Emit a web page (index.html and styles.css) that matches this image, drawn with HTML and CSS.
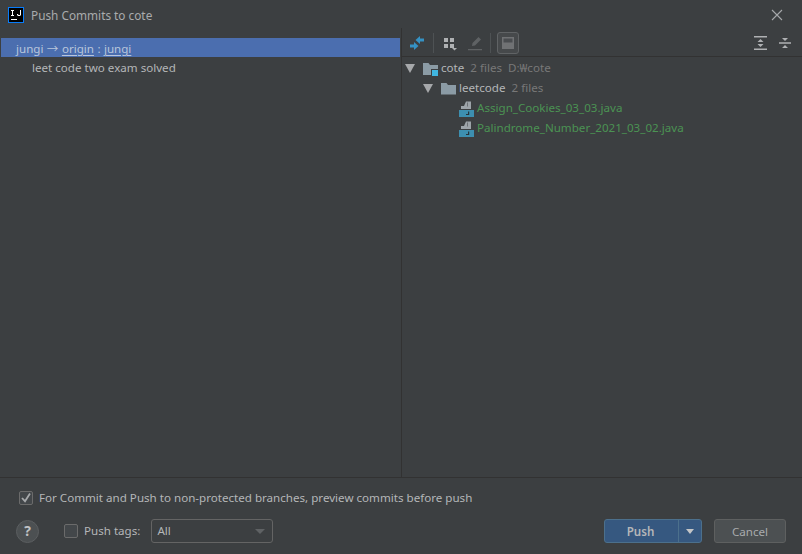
FILE: index.html
```html
<!DOCTYPE html>
<html lang="en">
<head>
<meta charset="utf-8">
<title>Push Commits to cote</title>
<link rel="stylesheet" href="styles.css">
</head>
<body>
<div class="dialog">
  <header class="titlebar">
    <svg class="app-icon" width="16" height="16" viewBox="0 0 16 16"><rect x="0.5" y="0.5" width="15" height="15" fill="#000" stroke="#087cfa"/><rect x="3" y="12" width="6" height="1" fill="#fff"/><path d="M3 3h3v1H5v4h1v1H3V8h1V4H3zM10 3h3v5l-1 1h-2l-1-1V7h1l.5 1H12V3h-2z" fill="#fff"/></svg>
    <span class="title">Push Commits to cote</span>
    <svg class="close" width="12" height="12" viewBox="0 0 12 12"><path d="M1 1l10 10M11 1L1 11" stroke="#a6a8aa" stroke-width="1.1" fill="none"/></svg>
  </header>
  <main class="split">
    <section class="commits">
      <div class="branch-row"><span>jungi → <u>origin</u> : <u>jungi</u></span></div>
      <div class="commit-row">leet code two exam solved</div>
    </section>
    <section class="changes">
      <div class="toolbar">
        <svg class="tb-icon" width="16" height="16" viewBox="0 0 16 16"><path d="M6.500 5L11 1v2.500h4v3h-4V9zM9.500 11L5 7v2.500H1v3h4V15z" fill="#3592c4"/></svg>
        <span class="sep"></span>
        <svg class="tb-icon" width="16" height="16" viewBox="0 0 16 16"><path d="M2 3h4v4H2zM8 3h4v4H8zM2 9h4v4H2zM8 9h4v4H8z" fill="#afb1b3"/><path d="M10 13h5l-2.500 2.500z" fill="#afb1b3"/></svg>
        <svg class="tb-icon pencil" width="16" height="16" viewBox="0 0 16 16"><path d="M1 14h14v1.300H1zM5 11l.5-3L11.500 2 14 4.500 8 10.500z" fill="#5f6264"/></svg>
        <span class="sep"></span>
        <span class="toggle"><svg width="14" height="14" viewBox="0 0 14 14"><rect x="1" y="1" width="12" height="12" fill="#707274"/><rect x="2.500" y="2.500" width="9" height="4" fill="#4a4d50"/></svg></span>
        <span class="spacer"></span>
        <svg class="tb-icon" width="16" height="16" viewBox="0 0 16 16"><path d="M1 1h13v1.500H1zM1 13.500h13V15H1zM7.500 4l3 3h-6zM4.500 9h6l-3 3z" fill="#afb1b3"/></svg>
        <svg class="tb-icon" width="16" height="16" viewBox="0 0 16 16"><path d="M2 7.300h12v1.400H2zM5 3h6L8 6zM8 10l3 3H5z" fill="#afb1b3"/></svg>
      </div>
      <ul class="tree">
        <li class="node depth0">
          <span class="arrow"></span>
          <svg class="node-icon" width="16" height="16" viewBox="0 0 16 16"><path d="M0 3h5.500l1.500 2h8v10H0z" fill="#8b9ba5"/><rect x="8" y="9" width="8" height="7" fill="#3b3f42"/><rect x="9" y="10" width="6" height="6" fill="#40b6e0"/></svg>
          <span class="name">cote</span><span class="meta">2 files</span><span class="meta">D:₩cote</span>
        </li>
        <li class="node depth1">
          <span class="arrow"></span>
          <svg class="node-icon" width="16" height="16" viewBox="0 0 16 16"><path d="M0 3h5.500l1.500 2h8v9.500H0z" fill="#8b9ba5"/></svg>
          <span class="name">leetcode</span><span class="meta">2 files</span>
        </li>
        <li class="node depth2">
          <svg class="node-icon" width="16" height="18" viewBox="0 0 16 18"><path d="M7 2.500h5V10H2V7h3z" fill="#9da4a9"/><rect x="8" y="3.500" width="1" height="4" fill="#6c7175"/><rect x="0" y="11" width="15" height="7" fill="#3d8fb0"/><path d="M9 12.500h1.200V16H7v-1h2z" fill="#26343b"/></svg>
          <span class="file">Assign_Cookies_03_03.java</span>
        </li>
        <li class="node depth2">
          <svg class="node-icon" width="16" height="18" viewBox="0 0 16 18"><path d="M7 2.500h5V10H2V7h3z" fill="#9da4a9"/><rect x="8" y="3.500" width="1" height="4" fill="#6c7175"/><rect x="0" y="11" width="15" height="7" fill="#3d8fb0"/><path d="M9 12.500h1.200V16H7v-1h2z" fill="#26343b"/></svg>
          <span class="file">Palindrome_Number_2021_03_02.java</span>
        </li>
      </ul>
    </section>
  </main>
  <footer class="footer">
    <label class="preview">
      <span class="check checked"><svg width="14" height="14" viewBox="0 0 14 14"><path d="M3 7l3 3.200L11 2.500" stroke="#a7a9ab" stroke-width="1.800" fill="none"/></svg></span>
      For Commit and Push to non-protected branches, preview commits before push
    </label>
    <div class="actions">
      <span class="help">?</span>
      <label class="tags"><span class="check"></span>Push tags:</label>
      <span class="select">All<span class="caret"></span></span>
      <span class="spacer"></span>
      <span class="push"><span class="push-main">Push</span><span class="push-drop"><span class="drop-caret"></span></span></span>
      <span class="cancel">Cancel</span>
    </div>
  </footer>
</div>
</body>
</html>
```
FILE: styles.css
```css
* { box-sizing: border-box; }
html, body { margin: 0; height: 100%; }
body { background: #3c3f41; color: #b4b6b8; font: 11.6px/16px "Noto Sans", "Noto Sans CJK KR", sans-serif; overflow: hidden; }
.dialog { width: 802px; height: 554px; display: flex; flex-direction: column; }
.titlebar { height: 28px; flex: none; display: flex; align-items: center; padding: 2px 19px 0 8px; gap: 7px; }
.title { flex: 1; color: #a9abad; font-size: 11.8px; }
.split { flex: 1; display: flex; min-height: 0; }
.commits { width: 402px; flex: none; padding: 10px 1px 0; border-right: 1px solid #323232; }
.branch-row { height: 19px; padding: 1px 0 0 15px; background: #4b6eaf; color: #b9c6dc; line-height: 19px; word-spacing: 0.4px; }
.branch-row u { text-underline-offset: 2px; }
.commit-row { height: 20px; line-height: 20px; padding: 1px 0 0 31px; }
.changes { flex: 1; min-width: 0; }
.toolbar { height: 29px; display: flex; align-items: center; padding: 0 9px 0 7px; border-bottom: 1px solid #323232; border-top: 1px solid #3c3f41; gap: 8px; }
.tb-icon { flex: none; }
.pencil { margin-left: 1px; margin-right: -1px; }
.sep { width: 1px; height: 20px; background: #4e5254; }
.toggle { width: 22px; height: 22px; margin-left: -2px; border: 1px solid #606365; border-radius: 3px; background: #46494b; display: flex; align-items: center; justify-content: center; }
.spacer { flex: 1; }
.tree { list-style: none; margin: 0; padding: 1px 0 0; }
.node { height: 20px; display: flex; align-items: center; }
.depth0 { padding-left: 3px; }
.depth1 { padding-left: 21px; }
.depth2 { padding-left: 57px; }
.arrow { width: 0; height: 0; border-left: 5px solid transparent; border-right: 5px solid transparent; border-top: 9px solid #a6a8aa; margin-right: 8px; }
.node-icon { flex: none; margin-right: 2px; }
.name { color: #b4b6b8; margin-right: 6px; }
.meta { color: #787878; margin-right: 6px; }
.file { color: #4b9353; }
.footer { height: 77px; flex: none; border-top: 1px solid #323232; padding: 10px 16px 0 16px; }
.preview { display: flex; align-items: center; gap: 6px; height: 20px; padding-left: 3px; }
.check { width: 14px; height: 14px; flex: none; border: 1px solid #6b6b6b; border-radius: 2px; background: #43474a; display: block; }
.check svg { display: block; margin: -1px; }
.actions { display: flex; align-items: center; margin-top: 11px; height: 24px; }
.help { width: 23px; height: 23px; border-radius: 50%; background: #4c5052; border: 1px solid #5b5e60; color: #c0c2c4; font-weight: 700; font-size: 14px; display: flex; align-items: center; justify-content: center; margin-right: 25px; }
.tags { display: flex; align-items: center; gap: 6px; margin-right: 11px; }
.select { width: 122px; height: 24px; border: 1px solid #646464; border-radius: 3px; background: #3c3f41; padding-left: 5px; line-height: 24px; display: flex; align-items: center; justify-content: space-between; padding-right: 7px; }
.caret { width: 0; height: 0; border-left: 5px solid transparent; border-right: 5px solid transparent; border-top: 5px solid #5f6264; }
.push { display: flex; width: 98px; height: 24px; background: #365880; border: 1px solid #4c708c; border-radius: 3px; color: #b4b6b8; font-weight: 600; margin-right: 12px; }
.push-main { flex: 1; text-align: center; line-height: 24px; border-right: 1px solid #4c708c; padding-right: 2px; }
.push-drop { width: 22px; display: flex; align-items: center; justify-content: center; }
.drop-caret { width: 0; height: 0; border-left: 4.5px solid transparent; border-right: 4.5px solid transparent; border-top: 5px solid #c3c5c7; }
.cancel { width: 72px; height: 24px; border: 1px solid #5e6060; border-radius: 3px; background: #4c5052; text-align: center; line-height: 24px; color: #a9abad; }
```
